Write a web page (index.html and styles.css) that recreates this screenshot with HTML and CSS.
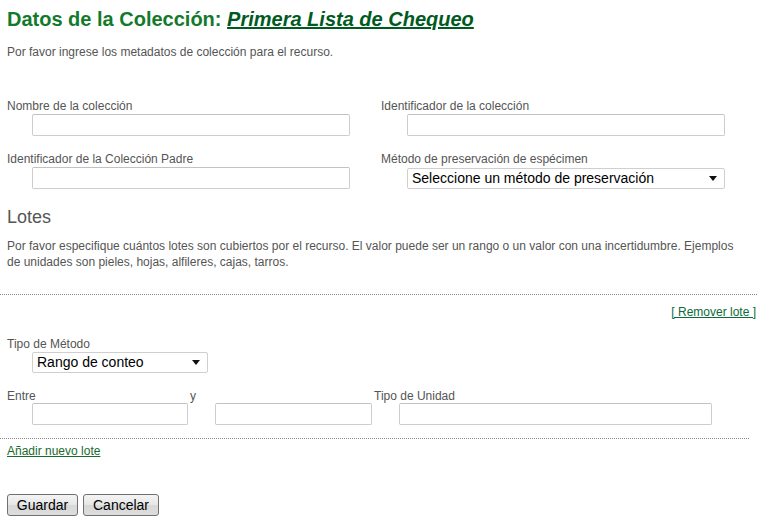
FILE: index.html
```html
<!DOCTYPE html>
<html lang="es">
<head>
<meta charset="utf-8">
<title>Datos de la Colección</title>
<link rel="stylesheet" href="styles.css">
</head>
<body>
<div class="page">
  <h1 class="title">Datos de la Colección: <a href="#" class="title-link">Primera Lista de Chequeo</a></h1>
  <p class="intro">Por favor ingrese los metadatos de colección para el recurso.</p>

  <div class="grid">
    <div class="field">
      <label class="label">Nombre de la colección</label>
      <input class="text wide" type="text">
    </div>
    <div class="field right">
      <label class="label">Identificador de la colección</label>
      <input class="text wide" type="text">
    </div>
    <div class="field">
      <label class="label">Identificador de la Colección Padre</label>
      <input class="text wide" type="text">
    </div>
    <div class="field right">
      <label class="label">Método de preservación de espécimen</label>
      <span class="select-wrap wide">
        <select class="select"><option>Seleccione un método de preservación</option></select>
      </span>
    </div>
  </div>

  <h2 class="section">Lotes</h2>
  <p class="desc">Por favor especifique cuántos lotes son cubiertos por el recurso. El valor puede ser un rango o un valor con una incertidumbre. Ejemplos de unidades son pieles, hojas, alfileres, cajas, tarros.</p>

  <hr class="dots dots-long">

  <div class="remove-row"><a href="#" class="link">[ Remover lote ]</a></div>

  <div class="field method">
    <label class="label">Tipo de Método</label>
    <span class="select-wrap narrow">
      <select class="select"><option>Rango de conteo</option></select>
    </span>
  </div>

  <div class="range">
    <div class="field f1">
      <label class="label">Entre</label>
      <input class="text r1" type="text">
    </div>
    <div class="field f2">
      <label class="label">y</label>
      <input class="text r2" type="text">
    </div>
    <div class="field f3">
      <label class="label">Tipo de Unidad</label>
      <input class="text r3" type="text">
    </div>
  </div>

  <hr class="dots dots-short">

  <div class="add-row"><a href="#" class="link">Añadir nuevo lote</a></div>

  <div class="buttons">
    <button class="btn save" type="button">Guardar</button>
    <button class="btn cancel" type="button">Cancelar</button>
  </div>
</div>
</body>
</html>
```

FILE: styles.css
```css
* { box-sizing: border-box; }

html, body {
  margin: 0;
  padding: 0;
  background: #ffffff;
}

body {
  font-family: "Liberation Sans", Arial, sans-serif;
  font-size: 12px;
  color: #555555;
}

.page {
  padding: 7px 6px 0 7px;
  width: 762px;
}

.title {
  margin: 0;
  font-size: 20px;
  line-height: 24px;
  font-weight: bold;
  color: #137a2c;
}

.title-link {
  color: #005a1f;
  font-style: italic;
  text-decoration: underline;
}

.intro {
  margin: 13px 0 0 0;
  line-height: 16px;
}

.grid {
  margin-top: 38px;
  display: grid;
  grid-template-columns: 374px 374px;
  row-gap: 15px;
}

.field {
  display: flex;
  flex-direction: column;
  align-items: flex-start;
}

.label {
  display: block;
  line-height: 16px;
  color: #555555;
}

.text {
  display: block;
  margin: 0 0 0 25px;
  height: 22px;
  border: 1px solid #cdcdcd;
  border-top-color: #c2c2c2;
  border-radius: 2px;
  background: #ffffff;
  font: 14px "Liberation Sans", Arial, sans-serif;
  padding: 0 4px;
}

.right .text,
.right .select-wrap { margin-left: 26px; }

.wide { width: 318px; }

.select-wrap {
  position: relative;
  display: block;
  margin: 1px 0 0 25px;
  height: 21px;
}

.select-wrap::after {
  content: "";
  position: absolute;
  right: 8px;
  top: 8px;
  border-left: 4px solid transparent;
  border-right: 4px solid transparent;
  border-top: 5px solid #111111;
  pointer-events: none;
}

.select {
  -webkit-appearance: none;
  appearance: none;
  width: 100%;
  height: 21px;
  margin: 0;
  border: 1px solid #cfcfcf;
  border-radius: 2px;
  background: #ffffff;
  color: #000000;
  font: 14px "Liberation Sans", Arial, sans-serif;
  line-height: 19px;
  padding: 0 20px 0 4px;
}

.narrow { width: 176px; }

.section {
  margin: 17px 0 0 0;
  font-size: 18px;
  line-height: 22px;
  font-weight: normal;
  color: #555555;
}

.desc {
  margin: 10px 0 0 0;
  line-height: 16px;
  width: 740px;
}

.dots {
  border: 0;
  border-top: 1px dotted #8a8a8a;
  height: 0;
  margin-left: -7px;
  margin-bottom: 0;
}

.dots-long {
  margin-top: 24px;
  width: 757px;
}

.dots-short {
  margin-top: 13px;
  width: 749px;
}

.remove-row {
  margin-top: 9px;
  line-height: 16px;
  text-align: right;
  width: 749px;
}

.link {
  color: #0b6b3a;
  text-decoration: underline;
}

.method {
  margin-top: 16px;
}

.method .select-wrap { margin-top: 0; }

.range {
  margin-top: 15px;
  display: flex;
}

.range .text { margin-top: -1px; }

.f1 { width: 183px; }
.f2 { width: 184px; }
.f3 { flex: 1; }

.r1 { width: 156px; }
.r2 { width: 157px; }
.r3 { width: 313px; }

.add-row {
  margin-top: 4px;
  line-height: 16px;
}

.add-row .link { color: #1a6a2c; }

.buttons {
  margin-top: 35px;
  display: flex;
  gap: 5px;
}

.btn {
  height: 22px;
  padding: 0;
  border: 1px solid #707070;
  border-radius: 3px;
  background: linear-gradient(#f4f4f4, #e6e6e6 50%, #d8d8d8 51%, #dddddd);
  color: #000000;
  font: 14px "Liberation Sans", Arial, sans-serif;
  line-height: 20px;
}

.save { width: 71px; }
.cancel { width: 76px; }
```
